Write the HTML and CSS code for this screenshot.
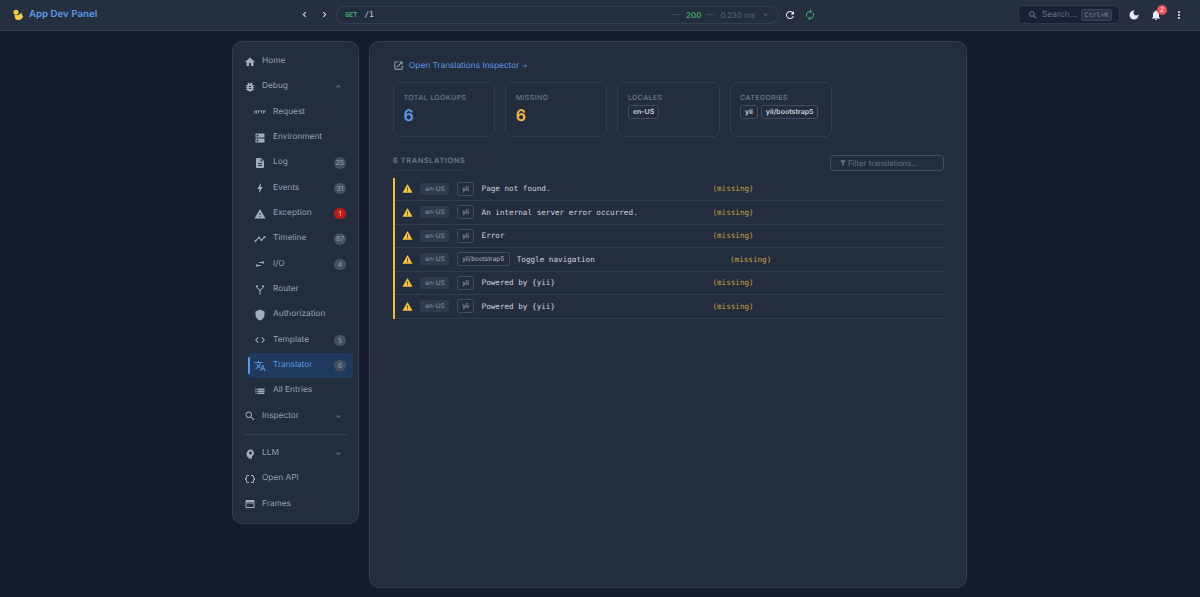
FILE: index.html
```html
<!DOCTYPE html>
<html lang="en">
<head>
<meta charset="utf-8">
<title>App Dev Panel</title>
<link rel="stylesheet" href="styles.css">
</head>
<body>
<svg class="defs" width="0" height="0" aria-hidden="true">
<symbol id="i-home" viewBox="0 0 24 24"><path d="M10 20v-6h4v6h5v-8h3L12 3 2 12h3v8z"/></symbol>
<symbol id="i-bug" viewBox="0 0 24 24"><path d="M20 8h-2.81c-.45-.78-1.07-1.45-1.82-1.96L17 4.41 15.59 3l-2.17 2.17C12.96 5.06 12.49 5 12 5c-.49 0-.96.06-1.41.17L8.41 3 7 4.41l1.62 1.63C7.88 6.55 7.26 7.22 6.81 8H4v2h2.09c-.05.33-.09.66-.09 1v1H4v2h2v1c0 .34.04.67.09 1H4v2h2.81c1.04 1.79 2.97 3 5.19 3s4.15-1.21 5.19-3H20v-2h-2.09c.05-.33.09-.66.09-1v-1h2v-2h-2v-1c0-.34-.04-.67-.09-1H20V8zm-6 8h-4v-2h4v2zm0-4h-4v-2h4v2z"/></symbol>
<symbol id="i-http" viewBox="0 0 24 24"><path d="M4.5 11h-2V9H1v6h1.5v-2.5h2V15H6V9H4.5v2zm2.5-.5h1.5V15H10v-4.5h1.5V9H7v1.5zm5.5 0H14V15h1.5v-4.5H17V9h-4.5v1.5zm9-1.5H18v6h1.5v-2h2c.8 0 1.5-.7 1.5-1.5v-1c0-.8-.7-1.5-1.5-1.5zm0 2.5h-2v-1h2v1z"/></symbol>
<symbol id="i-dns" viewBox="0 0 24 24"><path d="M20 13H4c-.55 0-1 .45-1 1v6c0 .55.45 1 1 1h16c.55 0 1-.45 1-1v-6c0-.55-.45-1-1-1zM7 19c-1.1 0-2-.9-2-2s.9-2 2-2 2 .9 2 2-.9 2-2 2zM20 3H4c-.55 0-1 .45-1 1v6c0 .55.45 1 1 1h16c.55 0 1-.45 1-1V4c0-.55-.45-1-1-1zM7 9c-1.1 0-2-.9-2-2s.9-2 2-2 2 .9 2 2-.9 2-2 2z"/></symbol>
<symbol id="i-doc" viewBox="0 0 24 24"><path d="M14 2H6c-1.1 0-1.99.9-1.99 2L4 20c0 1.1.89 2 1.99 2H18c1.1 0 2-.9 2-2V8l-6-6zm2 16H8v-2h8v2zm0-4H8v-2h8v2zm-3-5V3.5L18.5 9H13z"/></symbol>
<symbol id="i-bolt" viewBox="0 0 24 24"><path d="M11 21h-1l1-7H7.5c-.58 0-.57-.32-.38-.66.19-.34.05-.08.07-.12C8.48 10.94 10.42 7.54 13 3h1l-1 7h3.5c.49 0 .56.33.47.51l-.07.15C12.96 17.55 11 21 11 21z"/></symbol>
<symbol id="i-warn" viewBox="0 0 24 24"><path d="M1 21h22L12 2 1 21zm12-3h-2v-2h2v2zm0-4h-2v-4h2v4z"/></symbol>
<symbol id="i-timeline" viewBox="0 0 24 24"><path d="M23 8c0 1.1-.9 2-2 2-.18 0-.35-.02-.51-.07l-3.56 3.55c.05.16.07.34.07.52 0 1.1-.9 2-2 2s-2-.9-2-2c0-.18.02-.36.07-.52l-2.55-2.55c-.16.05-.34.07-.52.07s-.36-.02-.52-.07l-4.55 4.56c.05.16.07.33.07.51 0 1.1-.9 2-2 2s-2-.9-2-2 .9-2 2-2c.18 0 .35.02.51.07l4.56-4.55C8.02 9.36 8 9.18 8 9c0-1.1.9-2 2-2s2 .9 2 2c0 .18-.02.36-.07.52l2.55 2.55c.16-.05.34-.07.52-.07s.36.02.52.07l3.55-3.56C19.02 8.35 19 8.18 19 8c0-1.1.9-2 2-2s2 .9 2 2z"/></symbol>
<symbol id="i-swap" viewBox="0 0 24 24"><path d="M6.99 11L3 15l3.99 4v-3H14v-2H6.99v-3zM21 9l-3.99-4v3H10v2h7.01v3L21 9z"/></symbol>
<symbol id="i-route" viewBox="0 0 24 24"><path d="M11 22v-8.6L6.3 8.7l1.4-1.4L12 11.6l4.3-4.3 1.4 1.4-4.7 4.7V22z"/><circle cx="6" cy="5" r="2.3"/><circle cx="18" cy="5" r="2.3"/></symbol>
<symbol id="i-shield" viewBox="0 0 24 24"><path d="M12 1L3 5v6c0 5.55 3.84 10.74 9 12 5.16-1.26 9-6.45 9-12V5l-9-4z"/></symbol>
<symbol id="i-code" viewBox="0 0 24 24"><path d="M9.4 16.6L4.8 12l4.6-4.6L8 6l-6 6 6 6 1.4-1.4zm5.2 0l4.6-4.6-4.6-4.6L16 6l6 6-6 6-1.4-1.4z"/></symbol>
<symbol id="i-translate" viewBox="0 0 24 24"><path d="M12.87 15.07l-2.54-2.51.03-.03c1.74-1.94 2.98-4.17 3.71-6.53H17V4h-7V2H8v2H1v1.99h11.17C11.5 7.92 10.44 9.75 9 11.35 8.07 10.32 7.3 9.19 6.69 8h-2c.73 1.63 1.73 3.17 2.98 4.56l-5.09 5.02L4 19l5-5 3.11 3.11.76-2.04zM18.5 10h-2L12 22h2l1.12-3h4.75L21 22h2l-4.5-12zm-2.62 7l1.62-4.33L19.12 17h-3.24z"/></symbol>
<symbol id="i-list" viewBox="0 0 24 24"><path d="M3 14h2v-3H3zm0 4h2v-3H3zm0-8h2V7H3zm4 4h14v-3H7zm0 4h14v-3H7zM7 7v3h14V7z"/></symbol>
<symbol id="i-search" viewBox="0 0 24 24"><path d="M15.5 14h-.79l-.28-.27C15.41 12.59 16 11.11 16 9.5 16 5.91 13.09 3 9.5 3S3 5.91 3 9.5 5.91 16 9.5 16c1.61 0 3.09-.59 4.23-1.57l.27.28v.79l5 4.99L20.49 19l-4.99-5zm-6 0C7.01 14 5 11.99 5 9.5S7.01 5 9.5 5 14 7.01 14 9.5 11.99 14 9.5 14z"/></symbol>
<symbol id="i-brain" viewBox="0 0 24 24"><path fill-rule="evenodd" d="M13 3C9.25 3 6.2 5.94 6.02 9.64L4.1 12.2c-.25.33-.01.8.4.8H6v3c0 1.1.9 2 2 2h1v3h7v-4.68c2.36-1.12 4-3.53 4-6.32 0-3.87-3.13-7-7-7zm0 4.2a2.8 2.8 0 1 1 0 5.6 2.8 2.8 0 0 1 0-5.6z"/></symbol>
<symbol id="i-braces" viewBox="0 0 24 24"><path d="M4 7v2c0 .55-.45 1-1 1H2v4h1c.55 0 1 .45 1 1v2c0 1.65 1.35 3 3 3h3v-2H7c-.55 0-1-.45-1-1v-2c0-1.3-.84-2.42-2-2.83v-.34C5.16 11.42 6 10.3 6 9V7c0-.55.45-1 1-1h3V4H7C5.35 4 4 5.35 4 7z"/><path d="M21 10c-.55 0-1-.45-1-1V7c0-1.65-1.35-3-3-3h-3v2h3c.55 0 1 .45 1 1v2c0 1.3.84 2.42 2 2.83v.34c-1.16.41-2 1.52-2 2.83v2c0 .55-.45 1-1 1h-3v2h3c1.65 0 3-1.35 3-3v-2c0-.55.45-1 1-1h1v-4h-1z"/></symbol>
<symbol id="i-web" viewBox="0 0 24 24"><path d="M19 4H5c-1.11 0-2 .9-2 2v12c0 1.1.89 2 2 2h14c1.1 0 2-.9 2-2V6c0-1.1-.89-2-2-2zm0 14H5V8h14v10z"/><path d="M5 9h14v2H5z"/></symbol>
<symbol id="i-more" viewBox="0 0 24 24"><path d="M16.59 8.59L12 13.17 7.41 8.59 6 10l6 6 6-6z"/></symbol>
<symbol id="i-less" viewBox="0 0 24 24"><path d="M12 8l-6 6 1.41 1.41L12 10.83l4.59 4.58L18 14z"/></symbol>
<symbol id="i-left" viewBox="0 0 24 24"><path d="M15.41 7.41L14 6l-6 6 6 6 1.41-1.41L10.83 12z"/></symbol>
<symbol id="i-right" viewBox="0 0 24 24"><path d="M10 6L8.59 7.41 13.17 12l-4.58 4.59L10 18l6-6z"/></symbol>
<symbol id="i-refresh" viewBox="0 0 24 24"><path d="M17.65 6.35C16.2 4.9 14.21 4 12 4c-4.42 0-7.99 3.58-7.99 8s3.57 8 7.99 8c3.73 0 6.84-2.55 7.73-6h-2.08c-.82 2.33-3.04 4-5.65 4-3.31 0-6-2.69-6-6s2.69-6 6-6c1.66 0 3.14.69 4.22 1.78L13 11h7V4l-2.35 2.35z"/></symbol>
<symbol id="i-renew" viewBox="0 0 24 24"><path d="M12 6v3l4-4-4-4v3c-4.42 0-8 3.58-8 8 0 1.57.46 3.03 1.24 4.26L6.7 14.8c-.45-.83-.7-1.79-.7-2.8 0-3.31 2.69-6 6-6zm6.76 1.74L17.3 9.2c.44.84.7 1.79.7 2.8 0 3.31-2.69 6-6 6v-3l-4 4 4 4v-3c4.42 0 8-3.58 8-8 0-1.57-.46-3.03-1.24-4.26z"/></symbol>
<symbol id="i-moon" viewBox="0 0 24 24"><path d="M12 3c-4.97 0-9 4.03-9 9s4.03 9 9 9 9-4.03 9-9c0-.46-.04-.92-.1-1.36-.98 1.37-2.58 2.26-4.4 2.26-2.98 0-5.4-2.42-5.4-5.4 0-1.81.89-3.42 2.26-4.4-.44-.06-.9-.1-1.36-.1z"/></symbol>
<symbol id="i-bell" viewBox="0 0 24 24"><path d="M12 22c1.1 0 2-.9 2-2h-4c0 1.1.89 2 2 2zm6-6v-5c0-3.07-1.64-5.64-4.5-6.32V4c0-.83-.67-1.5-1.5-1.5s-1.5.67-1.5 1.5v.68C7.63 5.36 6 7.92 6 11v5l-2 2v1h16v-1l-2-2z"/></symbol>
<symbol id="i-vert" viewBox="0 0 24 24"><path d="M12 8c1.1 0 2-.9 2-2s-.9-2-2-2-2 .9-2 2 .9 2 2 2zm0 2c-1.1 0-2 .9-2 2s.9 2 2 2 2-.9 2-2-.9-2-2-2zm0 6c-1.1 0-2 .9-2 2s.9 2 2 2 2-.9 2-2-.9-2-2-2z"/></symbol>
<symbol id="i-open" viewBox="0 0 24 24"><path d="M19 19H5V5h7V3H5c-1.11 0-2 .9-2 2v14c0 1.1.89 2 2 2h14c1.1 0 2-.9 2-2v-7h-2v7zM14 3v2h3.59l-9.83 9.83 1.41 1.41L19 6.41V10h2V3h-7z"/></symbol>
<symbol id="i-filter" viewBox="0 0 24 24"><path d="M4.25 5.61C6.27 8.2 10 13 10 13v6c0 .55.45 1 1 1h2c.55 0 1-.45 1-1v-6s3.72-4.8 5.74-7.39c.51-.66.04-1.61-.79-1.61H5.04c-.83 0-1.3.95-.79 1.61z"/></symbol>
</svg>

<header class="topbar">
  <div class="brand">
    <svg class="duck" viewBox="0 0 24 24"><circle cx="8" cy="6.5" r="5" fill="#f7c948"/><path d="M5 12c2-1 4 1 7 0 3-1 5-3 7-5 1 1 .6 2.500 0 3.500 3 2 4 5 1.500 8-2 2.500-5 3.500-8 3.500-5 0-8-4-7.500-10z" fill="#f7c948"/><path d="M3.500 5L.5 7l3 1.500z" fill="#d98c2b"/></svg>
    <span class="brand-name">App Dev Panel</span>
  </div>
  <button class="nav-arrow"><svg class="ic11"><use href="#i-left"/></svg></button>
  <button class="nav-arrow"><svg class="ic11"><use href="#i-right"/></svg></button>
  <div class="urlbar">
    <span class="method">GET</span>
    <span class="path">/1</span>
    <span class="spacer"></span>
    <span class="dash"></span>
    <span class="status">200</span>
    <span class="dash"></span>
    <span class="time">0.230 ms</span>
    <svg class="ic9 url-caret"><use href="#i-more"/></svg>
  </div>
  <button class="nav-arrow tool-first"><svg class="ic12"><use href="#i-refresh"/></svg></button>
  <button class="nav-arrow tool-green"><svg class="ic12"><use href="#i-renew"/></svg></button>
  <span class="spacer"></span>
  <div class="searchbox">
    <svg class="ic10"><use href="#i-search"/></svg>
    <span class="search-text">Search...</span>
    <span class="kbd">Ctrl+K</span>
  </div>
  <button class="nav-arrow moon"><svg class="ic12"><use href="#i-moon"/></svg></button>
  <button class="nav-arrow bell"><svg class="ic12"><use href="#i-bell"/></svg><span class="bell-badge">2</span></button>
  <button class="nav-arrow vert"><svg class="ic12"><use href="#i-vert"/></svg></button>
</header>

<div class="page">
  <nav class="sidebar">
    <a class="item"><svg class="ic12"><use href="#i-home"/></svg><span class="label">Home</span></a>
    <a class="item"><svg class="ic12"><use href="#i-bug"/></svg><span class="label">Debug</span><svg class="ic9 caret"><use href="#i-less"/></svg></a>
    <a class="item sub"><svg class="ic12"><use href="#i-http"/></svg><span class="label">Request</span></a>
    <a class="item sub"><svg class="ic12"><use href="#i-dns"/></svg><span class="label">Environment</span></a>
    <a class="item sub"><svg class="ic12"><use href="#i-doc"/></svg><span class="label">Log</span><span class="count">25</span></a>
    <a class="item sub"><svg class="ic12"><use href="#i-bolt"/></svg><span class="label">Events</span><span class="count">31</span></a>
    <a class="item sub"><svg class="ic12"><use href="#i-warn"/></svg><span class="label">Exception</span><span class="count count-red">1</span></a>
    <a class="item sub"><svg class="ic12"><use href="#i-timeline"/></svg><span class="label">Timeline</span><span class="count">87</span></a>
    <a class="item sub"><svg class="ic12"><use href="#i-swap"/></svg><span class="label">I/O</span><span class="count">4</span></a>
    <a class="item sub"><svg class="ic12"><use href="#i-route"/></svg><span class="label">Router</span></a>
    <a class="item sub"><svg class="ic12"><use href="#i-shield"/></svg><span class="label">Authorization</span></a>
    <a class="item sub"><svg class="ic12"><use href="#i-code"/></svg><span class="label">Template</span><span class="count">5</span></a>
    <a class="item sub active"><svg class="ic12"><use href="#i-translate"/></svg><span class="label">Translator</span><span class="count">6</span></a>
    <a class="item sub"><svg class="ic12"><use href="#i-list"/></svg><span class="label">All Entries</span></a>
    <a class="item"><svg class="ic12"><use href="#i-search"/></svg><span class="label">Inspector</span><svg class="ic9 caret"><use href="#i-more"/></svg></a>
    <div class="divider"></div>
    <a class="item"><svg class="ic12"><use href="#i-brain"/></svg><span class="label">LLM</span><svg class="ic9 caret"><use href="#i-more"/></svg></a>
    <a class="item"><svg class="ic12"><use href="#i-braces"/></svg><span class="label">Open API</span></a>
    <a class="item"><svg class="ic12"><use href="#i-web"/></svg><span class="label">Frames</span></a>
  </nav>

  <main class="panel">
    <div class="inspector-link">
      <svg class="ic11"><use href="#i-open"/></svg>
      <span class="link-text">Open Translations Inspector <span class="link-arrow">→</span></span>
    </div>
    <section class="stats">
      <div class="stat"><div class="stat-label">TOTAL LOOKUPS</div><div class="stat-value blue">6</div></div>
      <div class="stat"><div class="stat-label">MISSING</div><div class="stat-value amber">6</div></div>
      <div class="stat"><div class="stat-label">LOCALES</div><div class="chips"><span class="chip">en-US</span></div></div>
      <div class="stat"><div class="stat-label">CATEGORIES</div><div class="chips"><span class="chip">yii</span><span class="chip">yii/bootstrap5</span></div></div>
    </section>
    <div class="section-head">
      <span class="section-title">6 TRANSLATIONS</span>
      <div class="filter"><svg class="ic8"><use href="#i-filter"/></svg><span>Filter translations...</span></div>
    </div>
    <div class="rows">
      <div class="row"><svg class="warn"><use href="#i-warn"/></svg><span class="tag-locale">en-US</span><span class="tag-cat">yii</span><span class="key">Page not found.</span><span class="missing">(missing)</span></div>
      <div class="row"><svg class="warn"><use href="#i-warn"/></svg><span class="tag-locale">en-US</span><span class="tag-cat">yii</span><span class="key">An internal server error occurred.</span><span class="missing">(missing)</span></div>
      <div class="row"><svg class="warn"><use href="#i-warn"/></svg><span class="tag-locale">en-US</span><span class="tag-cat">yii</span><span class="key">Error</span><span class="missing">(missing)</span></div>
      <div class="row"><svg class="warn"><use href="#i-warn"/></svg><span class="tag-locale">en-US</span><span class="tag-cat">yii/bootstrap5</span><span class="key">Toggle navigation</span><span class="missing">(missing)</span></div>
      <div class="row"><svg class="warn"><use href="#i-warn"/></svg><span class="tag-locale">en-US</span><span class="tag-cat">yii</span><span class="key">Powered by {yii}</span><span class="missing">(missing)</span></div>
      <div class="row"><svg class="warn"><use href="#i-warn"/></svg><span class="tag-locale">en-US</span><span class="tag-cat">yii</span><span class="key">Powered by {yii}</span><span class="missing">(missing)</span></div>
    </div>
  </main>
</div>
</body>
</html>
```

FILE: styles.css
```css
* { box-sizing: border-box; }
html, body { margin: 0; height: 100%; }
body {
  background: #161c2e;
  color: #cbd5e1;
  font-family: Inter, "Liberation Sans", sans-serif;
  font-size: 8.4px;
  text-rendering: geometricPrecision;
  overflow: hidden;
}
svg { fill: currentColor; flex: none; display: block; }
.defs { position: absolute; }
.ic8 { width: 8px; height: 8px; }
.ic9 { width: 9px; height: 9px; }
.ic10 { width: 10px; height: 10px; }
.ic11 { width: 11px; height: 11px; }
.ic12 { width: 12px; height: 12px; }
.spacer { flex: 1; }

.topbar {
  height: 31px;
  background: #262f40;
  border-bottom: 1px solid #333d4f;
  display: flex;
  align-items: center;
  padding: 0 11px 1px 12px;
}
.brand { display: flex; align-items: center; gap: 5px; width: 282px; }
.duck { width: 12px; height: 12px; }
.brand-name { font-size: 9.7px; font-weight: 600; color: #5b9be6; }
button.nav-arrow {
  background: none; border: 0; padding: 0; color: #e8edf4;
  width: 20px; height: 20px;
  display: flex; align-items: center; justify-content: center;
  position: relative;
}
.urlbar {
  width: 443px; height: 18px; margin-left: 2px;
  border: 1px solid #343f51; border-radius: 9px;
  display: flex; align-items: center; padding: 0 8px;
  background: #242d3e;
}
.method { font-family: "DejaVu Sans Mono", monospace; font-size: 6.8px; font-weight: 700; color: #3fa866; margin-right: 7px; }
.path { font-family: "DejaVu Sans Mono", monospace; font-size: 8px; color: #c4ccd8; }
.dash { width: 9px; height: 1px; background: #3b4657; margin: 0 5px; }
.status { font-size: 7.9px; font-weight: 600; color: #3fa866; }
.time { font-size: 7.8px; color: #5c6879; }
.url-caret { color: #5c6879; margin-left: 6px; }
.tool-first { margin-left: 1px; }
button.tool-green { color: #3fa866; }
.searchbox {
  width: 102px; height: 19px;
  background: #1a2134; border: 1px solid #2f394b; border-radius: 5px;
  display: flex; align-items: center; padding: 0 9.500px 0 9px; gap: 4px; color: #7d8899;
}
.search-text { font-size: 8.4px; color: #677386; flex: 1; }
.kbd {
  font-family: "DejaVu Sans Mono", monospace; font-size: 6.6px; color: #7d8899;
  background: #2a3446; border: 1px solid #3a4558; border-radius: 2px; padding: 1px 2.5px;
}
.moon { margin-left: 4px; }
.bell { margin-left: 2px; }
.vert { margin-left: 3px; }
.bell-badge {
  position: absolute; top: 0; right: -1px; width: 10px; height: 10px;
  border-radius: 50%; background: #e8545a; color: #fff; font-size: 6.5px;
  text-align: center; line-height: 10px;
}

.page {
  display: flex; align-items: flex-start; gap: 10px;
  width: 735px; margin-left: 232px; padding-top: 10px;
}
.sidebar {
  width: 127px; height: 483px; flex: none;
  background: #242d3e; border: 1px solid #333d4f; border-radius: 10px;
  padding: 7px 5px 0;
}
.item {
  height: 25.33px; display: flex; align-items: center; gap: 6px;
  padding: 0 7px 0 6px; color: #97a2b2; border-radius: 4px; position: relative;
}
.item > svg:first-child { color: #a2adbc; }
.label { flex: 1; font-size: 8.3px; padding-bottom: 1px; }
.sub { margin-left: 10px; gap: 7px; }
.caret { margin-right: 3px; color: #7d8899; }
.count {
  background: #465061; color: #98a3b3; border-radius: 6px; min-width: 12px; height: 11.5px; padding: 0 2px;
  font-size: 6.8px; line-height: 11.5px; text-align: center;
}
.count-red { background: #b71c1c; color: #f3c6c6; }
.active { background: #1f3a5c; color: #5b9be6; }
.active::before {
  content: ""; position: absolute; left: 0; top: 4px; bottom: 4px; width: 2px;
  background: #5b9be6; border-radius: 1px;
}
.item.active > svg:first-child { color: #5b9be6; }
.divider { height: 1px; background: #364051; margin: 5px 6px 6px; }

.panel {
  width: 598px; height: 547px; flex: none;
  background: #242d3e; border: 1px solid #333d4f; border-radius: 10px;
  padding: 16px 22px 16px 23px;
}
.inspector-link { display: flex; align-items: center; gap: 5px; height: 14px; font-size: 8.3px; color: #5b9be6; }
.inspector-link svg { color: #a2adbc; }
.link-text { padding-top: 1px; }
.link-arrow { font-size: 6px; }
.stats { display: flex; gap: 10px; margin-top: 10px; }
.stat {
  width: 102.2px; height: 55px;
  border: 1px solid #333d4f; border-radius: 7px;
  padding: 10px 9.5px 0;
}
.stat-label { font-size: 7px; font-weight: 500; letter-spacing: .4px; color: #6e7a8d; line-height: 9px; }
.stat-value { font-size: 16px; font-weight: 600; line-height: 20px; margin-top: 3px; }
.blue { color: #5b9be6; }
.amber { color: #f6bd3f; }
.chips { display: flex; gap: 3px; margin-top: 3px; }
.chip {
  font-size: 7px; font-weight: 600; color: #cdd4de;
  border: 1px solid #414c5e; border-radius: 3px; padding: 0 4px; line-height: 12px;
}
.section-head { display: flex; justify-content: space-between; align-items: flex-start; margin-top: 18px; height: 16px; }
.section-title { font-size: 7.4px; font-weight: 600; letter-spacing: .6px; color: #6e7a8d; line-height: 11px; padding-bottom: 4px; border-bottom: 1px solid #2d3748; }
.filter {
  width: 114px; height: 16px; border: 1px solid #414c5e; border-radius: 3px;
  display: flex; align-items: center; padding-left: 8px; gap: 1px;
  font-size: 7.8px; color: #677386;
}
.rows { margin-top: 6.5px; border-left: 2px solid #eebc3c; }
.row {
  height: 23.5px; display: flex; align-items: center; gap: 7.2px;
  padding: 0 8px 0 7px; border-bottom: 1px solid #333d4f;
}
.warn { color: #f6c23f; width: 11px; height: 11px; }
.tag-locale {
  background: #303a4c; color: #8d98a9; font-size: 6.4px; border-radius: 2px;
  padding: 0 5px; line-height: 12px;
}
.tag-cat {
  color: #aab3c0; font-size: 6.4px; border: 1px solid #414c5e; border-radius: 2px;
  padding: 0 4.5px; line-height: 12px;
}
.key, .missing { flex: 1 1 0; min-width: 0; font-family: "DejaVu Sans Mono", monospace; font-size: 7.64px; white-space: nowrap; }
.key { color: #cdd4de; }
.missing { color: #c9a23f; }
```
